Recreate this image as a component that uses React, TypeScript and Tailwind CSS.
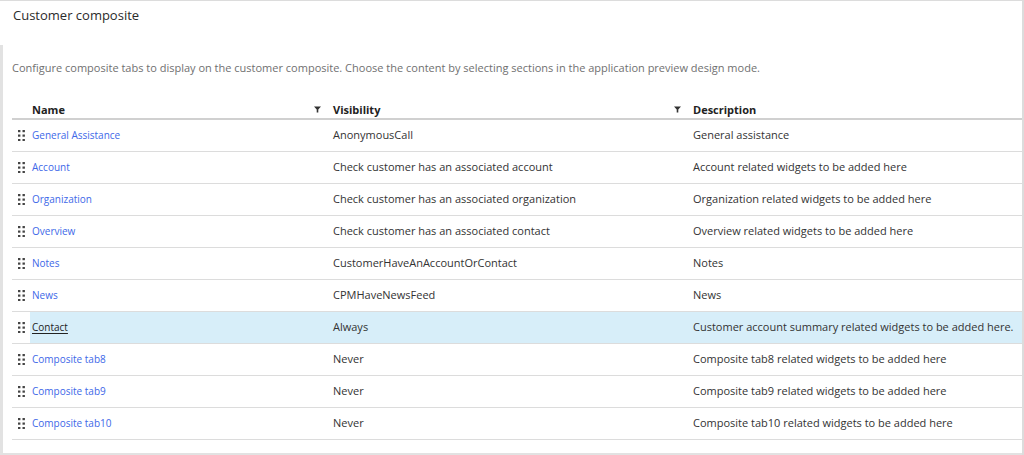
import React from 'react';

type Row = { name: string; visibility: string; description: string; selected?: boolean };

const ROWS: Row[] = [
  { name: 'General Assistance', visibility: 'AnonymousCall', description: 'General assistance' },
  { name: 'Account', visibility: 'Check customer has an associated account', description: 'Account related widgets to be added here' },
  { name: 'Organization', visibility: 'Check customer has an associated organization', description: 'Organization related widgets to be added here' },
  { name: 'Overview', visibility: 'Check customer has an associated contact', description: 'Overview related widgets to be added here' },
  { name: 'Notes', visibility: 'CustomerHaveAnAccountOrContact', description: 'Notes' },
  { name: 'News', visibility: 'CPMHaveNewsFeed', description: 'News' },
  { name: 'Contact', visibility: 'Always', description: 'Customer account summary related widgets to be added here.', selected: true },
  { name: 'Composite tab8', visibility: 'Never', description: 'Composite tab8 related widgets to be added here' },
  { name: 'Composite tab9', visibility: 'Never', description: 'Composite tab9 related widgets to be added here' },
  { name: 'Composite tab10', visibility: 'Never', description: 'Composite tab10 related widgets to be added here' },
];

const FilterIcon = () => (
  <svg width="7" height="7" viewBox="0 0 7 7" className="shrink-0">
    <path d="M0 0.5h7L4.3 3.4V6.5H2.7V3.4Z" fill="#333" />
  </svg>
);

const DragHandle = () => (
  <svg width="7" height="11" viewBox="0 0 7 11">
    {[0, 4.5, 9].map((y) =>
      [0, 4.5].map((x) => <rect key={`${x}-${y}`} x={x} y={y} width="2.4" height="2.2" fill="#444" />)
    )}
  </svg>
);

export default function App() {
  return (
    <div
      className="w-[1024px] h-[455px] bg-white border-t border-r-2 border-[#dcdcdc] flex flex-col text-[#333]"
      style={{ fontFamily: '"Open Sans", "Liberation Sans", sans-serif' }}
    >
      <div className="h-[44px] shrink-0 pl-[13px] pt-[5px] text-[13px] leading-[18px] text-[#2b2b2b]">
        Customer composite
      </div>

      <div className="flex-1 border-l-[3px] border-b-2 border-[#e2e2e2] pl-[9px] flex flex-col">
        <p className="mt-[15px] text-[11px] leading-[16px] text-[#707070]">
          Configure composite tabs to display on the customer composite. Choose the content by selecting sections in the
          application preview design mode.
        </p>

        <div className="mt-[25px] text-[11px]">
          <div className="grid grid-cols-[18px_299px_360px_1fr] h-[19px] border-b-2 border-[#d0d0d0] font-bold text-[#222] items-start">
            <div />
            <div className="pl-[2px] pr-[8px] flex items-center justify-between leading-[17px]">
              <span>Name</span>
              <FilterIcon />
            </div>
            <div className="pl-[4px] pr-[8px] flex items-center justify-between leading-[17px]">
              <span>Visibility</span>
              <FilterIcon />
            </div>
            <div className="pl-[4px] leading-[17px]">Description</div>
          </div>

          {ROWS.map((r) => (
            <div
              key={r.name}
              className="grid grid-cols-[18px_299px_360px_1fr] h-[32px] border-b border-[#dcdcdc] items-center"
            >
              <div className="flex items-center justify-center pl-[1px] h-full">
                <DragHandle />
              </div>
              <div className={`pl-[2px] h-full flex items-center ${r.selected ? 'bg-[#d7eef9]' : ''}`}>
                <span
                  className={
                    r.selected
                      ? 'text-[10px] text-[#222] underline underline-offset-2'
                      : 'text-[10px] text-[#4068e8]'
                  }
                >
                  {r.name}
                </span>
              </div>
              <div className={`pl-[4px] h-full flex items-center ${r.selected ? 'bg-[#d7eef9]' : ''}`}>
                {r.visibility}
              </div>
              <div className={`pl-[4px] h-full flex items-center ${r.selected ? 'bg-[#d7eef9]' : ''}`}>
                {r.description}
              </div>
            </div>
          ))}
        </div>
      </div>
    </div>
  );
}
